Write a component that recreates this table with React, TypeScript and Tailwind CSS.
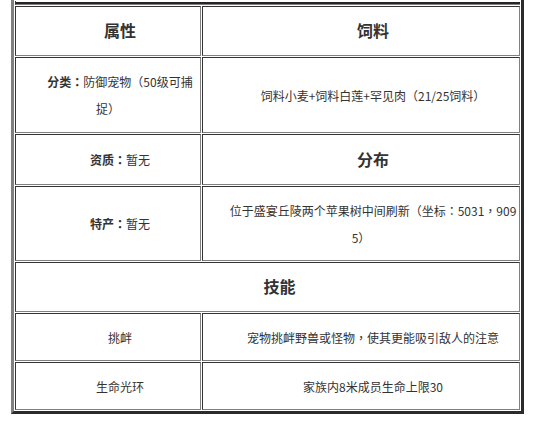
const CELL =
  "border border-solid border-t-[#333] border-l-[#333] border-r-[#808080] border-b-[#808080] px-px py-0 text-center align-middle"

// full-width punctuation sits centred in its box, as in the screenshot
function P({ c }: { c: string }) {
  return <span className="font-['Noto_Sans_CJK_TC',sans-serif]">{c}</span>
}

type Row = {
  h: string
  a: React.ReactNode
  b?: React.ReactNode
  head?: boolean
}

const ROWS: Row[] = [
  { h: "h-[50px]", a: <strong className="text-[16px]">属性</strong>, b: <strong className="text-[16px]">饲料</strong> },
  {
    h: "h-[76px]",
    a: (
      <>
        <strong>分类<P c="：" /></strong>防御宠物<P c="（" />50级可捕
        <br />
        捉<P c="）" />
      </>
    ),
    b: (
      <>
        饲料小麦+饲料白莲+罕见肉<P c="（" />21/25饲料<P c="）" />
      </>
    ),
  },
  {
    h: "h-[51px]",
    a: (
      <>
        <strong>资质<P c="：" /></strong>暂无
      </>
    ),
    b: <strong className="text-[16px]">分布</strong>,
  },
  {
    h: "h-[75px]",
    a: (
      <>
        <strong>特产<P c="：" /></strong>暂无
      </>
    ),
    b: (
      <>
        位于盛宴丘陵两个苹果树中间刷新<P c="（" />坐标<P c="：" />5031<P c="，" />909
        <br />
        5<P c="）" />
      </>
    ),
  },
  { h: "h-[50px]", a: <strong className="text-[16px]">技能</strong>, head: true },
  {
    h: "h-[48px]",
    a: "挑衅",
    b: (
      <>
        宠物挑衅野兽或怪物<P c="，" />使其更能吸引敌人的注意
      </>
    ),
  },
  { h: "h-[48px]", a: "生命光环", b: "家族内8米成员生命上限30" },
]

export default function App() {
  return (
    <div className="h-[421px] w-[533px] overflow-hidden bg-white font-['Noto_Sans_CJK_SC',sans-serif] text-[12px] leading-[27px] text-[#333]">
      <table className="ml-[11px] w-[513px] table-fixed border-separate border-spacing-[1px] border-solid border-t-0 border-l-[3px] border-r-[3px] border-b-[3px] border-l-[#808080] border-r-[#2b2b2b] border-b-[#2b2b2b]">
        <colgroup>
          <col className="w-[186px]" />
          <col className="w-[318px]" />
        </colgroup>
        <tbody>
          <tr>
            <td
              colSpan={2}
              className="h-[4px] border-0 border-b border-solid border-b-[#808080] border-l border-l-[#333] p-0 leading-[0]"
            >
              <div className="h-[2px] bg-[#2a2228]" />
            </td>
          </tr>
          {ROWS.map((r, i) => (
            <tr key={i}>
              {r.head ? (
                <td colSpan={2} className={`${CELL} ${r.h}`}>
                  <div className="indent-[24px] whitespace-nowrap">{r.a}</div>
                </td>
              ) : (
                <>
                  <td className={`${CELL} ${r.h}`}>
                    <div className="indent-[24px] whitespace-nowrap">{r.a}</div>
                  </td>
                  <td className={`${CELL} ${r.h}`}>
                    <div className="indent-[24px] whitespace-nowrap">{r.b}</div>
                  </td>
                </>
              )}
            </tr>
          ))}
        </tbody>
      </table>
    </div>
  )
}
